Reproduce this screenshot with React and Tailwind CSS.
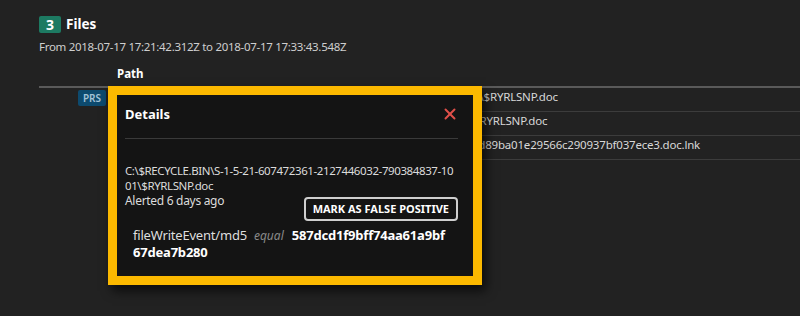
import { X } from "lucide-react";

const rows = [
  { path: "C:\\$RECYCLE.BIN\\S-1-5-21-607472361-2127446032-790384837-1001\\$RYRLSNP.doc", badge: true, pad: "pl-[10px]" },
  { path: "C:\\Users\\Administrator\\AppData\\Roaming\\Microsoft\\Templates\\~$RYRLSNP.doc", badge: false, pad: "pl-[14px]" },
  { path: "C:\\Users\\Administrator\\AppData\\Roaming\\Microsoft\\Recent\\7b5d89ba01e29566c290937bf037ece3.doc.lnk", badge: false, pad: "pl-[24px]" },
];

export default function App() {
  return (
    <div
      className="w-[800px] h-[316px] bg-[#222222] text-[#d4d4d4] overflow-hidden relative"
      style={{ fontFamily: '"Noto Sans", "Open Sans", sans-serif' }}
    >
      <div className="pl-[39px] pt-4">
        {/* Title */}
        <div className="flex items-center gap-[5px] h-[17px]">
          <span className="w-[22px] text-center bg-[#1d7a62] text-white font-bold text-[14px] leading-[17px] rounded-[2px]">3</span>
          <span className="text-white font-bold text-[13.5px] leading-[17px]">Files</span>
        </div>
        <p className="text-[11.5px] tracking-[-0.3px] leading-[16px] mt-[6px] text-[#cfcfcf]">
          From 2018-07-17 17:21:42.312Z to 2018-07-17 17:33:43.548Z
        </p>

        {/* Table */}
        <div>
          <div className="flex h-[33px] border-b-2 border-[#5a5a5a]">
            <div className="w-[78px]" />
            <div className="text-white font-bold text-[11.5px] leading-[16px] pt-[11px]">Path</div>
          </div>
          {rows.map((r, i) => (
            <div key={i} className="flex h-[24px]">
              <div className="w-[78px] h-full flex items-start justify-end pt-[2px] pr-[11px]">
                {r.badge && (
                  <span className="bg-[#0d4a6e] text-[#a3c2d6] text-[10px] leading-[16px] px-[5px] rounded-[2px] font-semibold">PRS</span>
                )}
              </div>
              <div className={`flex-1 h-full border-b border-[#3c3c3c] ${r.pad} text-[11.5px] tracking-[-0.2px] leading-[18px] text-[#d8d8d8] whitespace-nowrap`}>
                {r.path}
              </div>
            </div>
          ))}
        </div>
      </div>

      {/* Details popover */}
      <div className="absolute left-[108px] top-[86px] w-[374px] h-[199px] border-[9px] border-[#fcb900] bg-[#141414] shadow-[4px_6px_10px_rgba(0,0,0,0.65)]">
        <div className="pl-2 pr-[15px]">
          <div className="flex items-center justify-between h-[44px] border-b border-[#3a3a3a] pb-[3px]">
            <span className="text-white font-bold text-[13px]">Details</span>
            <X size={18} strokeWidth={2.6} className="text-[#e0504a] mr-[-1px] mt-[-2px]" />
          </div>
          <div className="text-[11.5px] tracking-[-0.4px] leading-[15px] text-[#dcdcdc] mt-[24px] break-all">
            C:\$RECYCLE.BIN\S-1-5-21-607472361-2127446032-790384837-1001\$RYRLSNP.doc
          </div>
          <div className="flex items-start justify-between">
            <div className="text-[12px] tracking-[-0.3px] leading-[15px] text-[#dcdcdc]">Alerted 6 days ago</div>
            <button className="mt-[4px] border-2 border-[#cfcfcf] rounded-[4px] h-[24px] px-[7px] text-white text-[11px] font-bold leading-[20px]">
              MARK AS FALSE POSITIVE
            </button>
          </div>
          <div className="pl-2 pr-[8px] mt-[6px] text-[13px] tracking-[-0.2px] leading-[16px] text-[#dedede] break-all">
            fileWriteEvent/md5
            <span className="italic text-[12px] tracking-normal text-[#8a8a8a] ml-[7px] mr-[8px]">equal</span>
            <span className="font-bold text-white">587dcd1f9bff74aa61a9bf67dea7b280</span>
          </div>
        </div>
      </div>
    </div>
  );
}
